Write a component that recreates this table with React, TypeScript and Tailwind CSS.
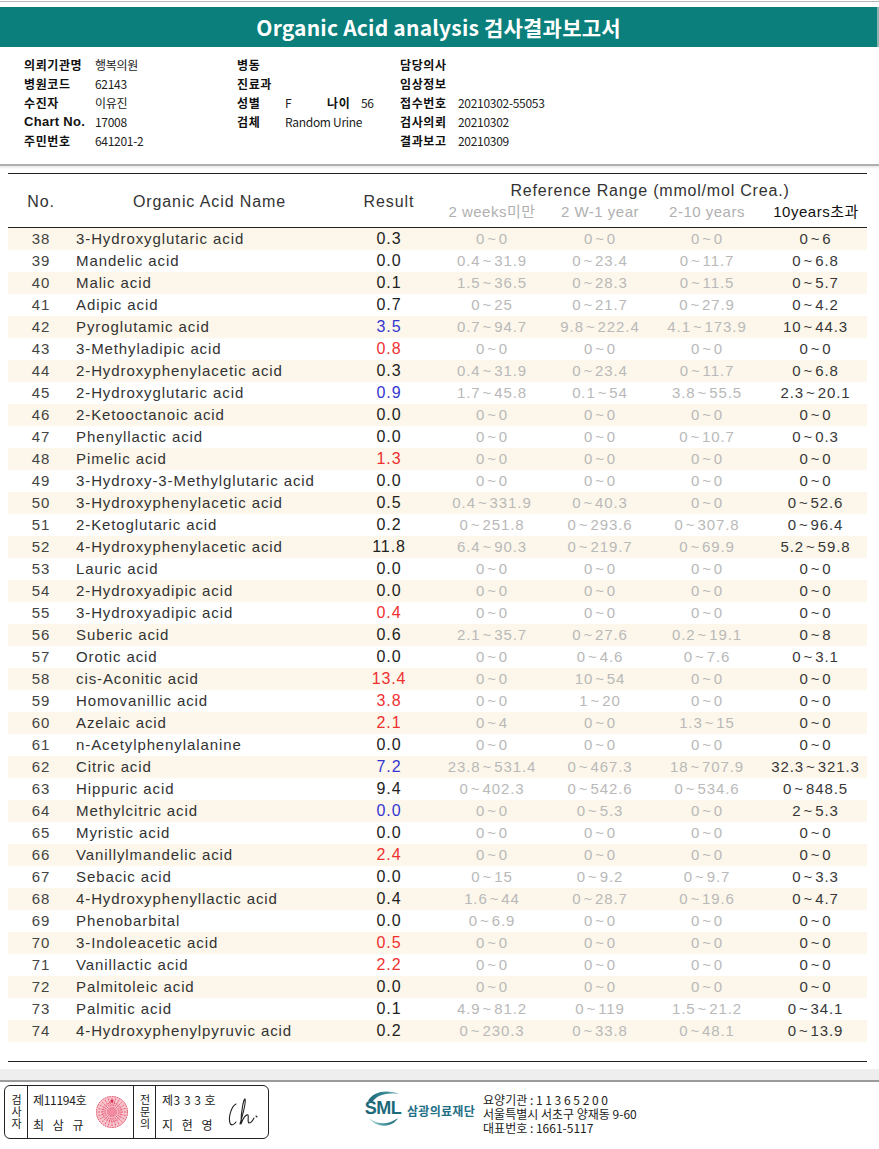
import React from 'react';

type Row = [number, string, string, '' | 'r' | 'b', string, string, string, string];

const ROWS: Row[] = [
  [38, '3-Hydroxyglutaric acid', '0.3', '', '0~0', '0~0', '0~0', '0~6'],
  [39, 'Mandelic acid', '0.0', '', '0.4~31.9', '0~23.4', '0~11.7', '0~6.8'],
  [40, 'Malic acid', '0.1', '', '1.5~36.5', '0~28.3', '0~11.5', '0~5.7'],
  [41, 'Adipic acid', '0.7', '', '0~25', '0~21.7', '0~27.9', '0~4.2'],
  [42, 'Pyroglutamic acid', '3.5', 'b', '0.7~94.7', '9.8~222.4', '4.1~173.9', '10~44.3'],
  [43, '3-Methyladipic acid', '0.8', 'r', '0~0', '0~0', '0~0', '0~0'],
  [44, '2-Hydroxyphenylacetic acid', '0.3', '', '0.4~31.9', '0~23.4', '0~11.7', '0~6.8'],
  [45, '2-Hydroxyglutaric acid', '0.9', 'b', '1.7~45.8', '0.1~54', '3.8~55.5', '2.3~20.1'],
  [46, '2-Ketooctanoic acid', '0.0', '', '0~0', '0~0', '0~0', '0~0'],
  [47, 'Phenyllactic acid', '0.0', '', '0~0', '0~0', '0~10.7', '0~0.3'],
  [48, 'Pimelic acid', '1.3', 'r', '0~0', '0~0', '0~0', '0~0'],
  [49, '3-Hydroxy-3-Methylglutaric acid', '0.0', '', '0~0', '0~0', '0~0', '0~0'],
  [50, '3-Hydroxyphenylacetic acid', '0.5', '', '0.4~331.9', '0~40.3', '0~0', '0~52.6'],
  [51, '2-Ketoglutaric acid', '0.2', '', '0~251.8', '0~293.6', '0~307.8', '0~96.4'],
  [52, '4-Hydroxyphenylacetic acid', '11.8', '', '6.4~90.3', '0~219.7', '0~69.9', '5.2~59.8'],
  [53, 'Lauric acid', '0.0', '', '0~0', '0~0', '0~0', '0~0'],
  [54, '2-Hydroxyadipic acid', '0.0', '', '0~0', '0~0', '0~0', '0~0'],
  [55, '3-Hydroxyadipic acid', '0.4', 'r', '0~0', '0~0', '0~0', '0~0'],
  [56, 'Suberic acid', '0.6', '', '2.1~35.7', '0~27.6', '0.2~19.1', '0~8'],
  [57, 'Orotic acid', '0.0', '', '0~0', '0~4.6', '0~7.6', '0~3.1'],
  [58, 'cis-Aconitic acid', '13.4', 'r', '0~0', '10~54', '0~0', '0~0'],
  [59, 'Homovanillic acid', '3.8', 'r', '0~0', '1~20', '0~0', '0~0'],
  [60, 'Azelaic acid', '2.1', 'r', '0~4', '0~0', '1.3~15', '0~0'],
  [61, 'n-Acetylphenylalanine', '0.0', '', '0~0', '0~0', '0~0', '0~0'],
  [62, 'Citric acid', '7.2', 'b', '23.8~531.4', '0~467.3', '18~707.9', '32.3~321.3'],
  [63, 'Hippuric acid', '9.4', '', '0~402.3', '0~542.6', '0~534.6', '0~848.5'],
  [64, 'Methylcitric acid', '0.0', 'b', '0~0', '0~5.3', '0~0', '2~5.3'],
  [65, 'Myristic acid', '0.0', '', '0~0', '0~0', '0~0', '0~0'],
  [66, 'Vanillylmandelic acid', '2.4', 'r', '0~0', '0~0', '0~0', '0~0'],
  [67, 'Sebacic acid', '0.0', '', '0~15', '0~9.2', '0~9.7', '0~3.3'],
  [68, '4-Hydroxyphenyllactic acid', '0.4', '', '1.6~44', '0~28.7', '0~19.6', '0~4.7'],
  [69, 'Phenobarbital', '0.0', '', '0~6.9', '0~0', '0~0', '0~0'],
  [70, '3-Indoleacetic acid', '0.5', 'r', '0~0', '0~0', '0~0', '0~0'],
  [71, 'Vanillactic acid', '2.2', 'r', '0~0', '0~0', '0~0', '0~0'],
  [72, 'Palmitoleic acid', '0.0', '', '0~0', '0~0', '0~0', '0~0'],
  [73, 'Palmitic acid', '0.1', '', '4.9~81.2', '0~119', '1.5~21.2', '0~34.1'],
  [74, '4-Hydroxyphenylpyruvic acid', '0.2', '', '0~230.3', '0~33.8', '0~48.1', '0~13.9'],
];

const GRID = 'grid grid-cols-[66px_271px_88px_118px_98px_116px_101px]';

function Range({ v, dark }: { v: string; dark?: boolean }) {
  const [a, b] = v.split('~');
  return (
    <span className={`text-center whitespace-nowrap ${dark ? 'text-[#383838]' : 'text-[#b9b9b9]'}`}>
      {a}
      <span className="mx-[2px]">~</span>
      {b}
    </span>
  );
}

function Stamp() {
  const spokes = Array.from({ length: 24 }, (_, i) => i * 15);
  return (
    <svg width="34" height="34" viewBox="0 0 34 34">
      <circle cx="17" cy="17" r="16" fill="#f7c4cc" />
      <circle cx="17" cy="17" r="15.5" fill="none" stroke="#e0506a" strokeWidth="1" strokeDasharray="1.5 1" />
      {spokes.map((a) => (
        <line
          key={a}
          x1="17"
          y1="17"
          x2={17 + 14 * Math.cos((a * Math.PI) / 180)}
          y2={17 + 14 * Math.sin((a * Math.PI) / 180)}
          stroke="#e4486a"
          strokeWidth="0.8"
          strokeDasharray="2 1"
        />
      ))}
      <circle cx="17" cy="17" r="9" fill="none" stroke="#e03a5c" strokeWidth="1" strokeDasharray="1 1" />
      <circle cx="17" cy="17" r="4" fill="#f18aa0" />
      <circle cx="17" cy="6" r="1.6" fill="#d8304f" />
    </svg>
  );
}

function Signature() {
  return (
    <svg width="34" height="32" viewBox="0 0 34 32" fill="none" stroke="#222" strokeWidth="1.1" strokeLinecap="round">
      <path d="M10 8 C6 10 2 20 4 27 C5 30 8 29 10 26" />
      <path d="M14 28 C17 18 20 6 19 3 C18 2 15 14 15 28 C17 22 20 18 22 19 C23 21 21 26 23 27 C25 27 27 24 28 22" />
      <path d="M30 20 L31 21" />
    </svg>
  );
}

function Logo() {
  return (
    <div className="flex flex-col items-center w-[42px]">
      <svg width="36" height="11" viewBox="0 0 36 11">
        <defs>
          <linearGradient id="lt" x1="0" x2="1" y1="0" y2="0">
            <stop offset="0" stopColor="#1c6577" />
            <stop offset="0.6" stopColor="#3f8f99" />
            <stop offset="1" stopColor="#b9dde0" />
          </linearGradient>
        </defs>
        <path d="M3 11 C8 2 20 -1 35 4 C22 2 12 5 8 11 Z" fill="url(#lt)" />
      </svg>
      <span className="text-[18px] leading-[14px] font-bold text-[#1d6a7b] tracking-[-0.5px]">SML</span>
      <svg width="36" height="13" viewBox="0 0 36 13">
        <defs>
          <linearGradient id="lb" x1="0" x2="1" y1="0" y2="0">
            <stop offset="0" stopColor="#c2e2e4" />
            <stop offset="0.5" stopColor="#4d9aa3" />
            <stop offset="1" stopColor="#1c6577" />
          </linearGradient>
        </defs>
        <path d="M3 2 C10 9 22 11 33 3 C27 13 12 14 3 2 Z" fill="url(#lb)" />
      </svg>
    </div>
  );
}

const KO = "font-['Noto_Sans_CJK_KR','Liberation_Sans',sans-serif]";

function Label({ children }: { children: React.ReactNode }) {
  return <span className={`font-bold text-[12px] text-[#111] tracking-[0.6px] ${KO}`}>{children}</span>;
}

function Val({ children }: { children?: React.ReactNode }) {
  return <span className={`text-[12px] text-[#222] tracking-[-0.3px] ${KO}`}>{children}</span>;
}

export default function App() {
  return (
    <div className="w-[879px] h-[1149px] bg-white overflow-hidden font-['Liberation_Sans','Noto_Sans_CJK_KR',sans-serif] text-[#222]">
      {/* top bar */}
      <div className="h-[1px] mt-[1px] bg-[#b8b8b8]" />
      <div className="mt-[5px] h-[40px] bg-[#0a7f7b] border-r-2 border-[#8fb3b1] flex items-center justify-center">
        <h1 className="text-white text-[21px] font-bold font-['Noto_Sans_CJK_KR',sans-serif] leading-none tracking-[0.2px]">
          Organic Acid analysis 검사결과보고서
        </h1>
      </div>

      {/* patient info */}
      <div className="mt-[8px] pl-[24px] grid grid-cols-[71px_142px_48px_115px_58px_1fr] auto-rows-[19px] items-center leading-[19px]">
        <Label>의뢰기관명</Label>
        <Val>행복의원</Val>
        <Label>병동</Label>
        <Val />
        <Label>담당의사</Label>
        <Val />

        <Label>병원코드</Label>
        <Val>62143</Val>
        <Label>진료과</Label>
        <Val />
        <Label>임상정보</Label>
        <Val />

        <Label>수진자</Label>
        <Val>이유진</Val>
        <Label>성별</Label>
        <div className="flex">
          <span className="w-[42px]"><Val>F</Val></span>
          <span className="w-[34px]"><Label>나이</Label></span>
          <Val>56</Val>
        </div>
        <Label>접수번호</Label>
        <Val>20210302-55053</Val>

        <span className="font-bold text-[13px] text-[#111] tracking-[0.3px]">Chart No.</span>
        <Val>17008</Val>
        <Label>검체</Label>
        <Val>Random Urine</Val>
        <Label>검사의뢰</Label>
        <Val>20210302</Val>

        <Label>주민번호</Label>
        <Val>641201-2</Val>
        <span />
        <span />
        <Label>결과보고</Label>
        <Val>20210309</Val>
      </div>

      {/* separator */}
      <div className="mt-[14px] h-[2px] bg-[#b0b0b0]" />
      <div className="h-[3px] bg-gradient-to-b from-[#e6e6e6] to-white" />

      {/* table */}
      <div className="mt-[4px] ml-[8px] w-[859px] text-[15px] tracking-[0.9px]">
        <div className="grid grid-cols-[66px_271px_88px_434px] h-[55px] border-t border-b border-[#222] text-[16px] text-[#333]">
          <div className="flex items-center justify-center pt-[3px]">No.</div>
          <div className="flex items-center justify-center pt-[3px]">Organic Acid Name</div>
          <div className="flex items-center justify-center pt-[3px]">Result</div>
          <div className="flex flex-col pt-[8px]">
            <div className="text-center leading-[18px] tracking-[0.8px]">Reference Range (mmol/mol Crea.)</div>
            <div className="grid grid-cols-[118px_98px_116px_102px] leading-[24px] text-[15px] tracking-[0.5px]">
              <span className="text-center text-[#b0b0b0]">2 weeks미만</span>
              <span className="text-center text-[#b0b0b0]">2 W-1 year</span>
              <span className="text-center text-[#b0b0b0]">2-10 years</span>
              <span className="text-center text-[#111]">10years초과</span>
            </div>
          </div>
        </div>

        {ROWS.map((r, i) => (
          <div
            key={r[0]}
            className={`${GRID} h-[22px] items-center leading-[22px] ${i % 2 === 0 ? 'bg-[#fcf7ea]' : 'bg-white'}`}
          >
            <span className="text-center text-[#444]">{r[0]}</span>
            <span className="pl-[2px] text-[#333] whitespace-nowrap">{r[1]}</span>
            <span
              className={`text-center text-[16px] ${
                r[3] === 'r' ? 'text-[#ee3030]' : r[3] === 'b' ? 'text-[#3535d0]' : 'text-[#222]'
              }`}
            >
              {r[2]}
            </span>
            <Range v={r[4]} />
            <Range v={r[5]} />
            <Range v={r[6]} />
            <Range v={r[7]} dark />
          </div>
        ))}

        <div className="mt-[19px] border-t border-[#222]" />
      </div>

      {/* footer bands */}
      <div className="h-[7px]" />
      <div className="h-[11px] bg-[#eeeeee]" />
      <div className="h-[2px] bg-[#9a9a9a]" />

      {/* footer */}
      <div className="flex items-start pt-[3px]">
        <div className={`ml-[4px] w-[265px] h-[54px] border border-[#222] rounded-[6px] flex text-[12px] text-[#222] ${KO}`}>
          <div className="w-[23px] border-r border-[#222] flex items-center justify-center">
            <span className="[writing-mode:vertical-rl] text-[11px] leading-none tracking-[1px]">검사자</span>
          </div>
          <div className="w-[106px] border-r border-[#222] flex items-center pl-[5px] pr-[4px]">
            <div className="flex flex-col leading-[14px] gap-[11px] whitespace-nowrap">
              <span className="tracking-[-0.3px]">제11194호</span>
              <span className="tracking-[3px]">최 삼 규</span>
            </div>
            <div className="ml-auto">
              <Stamp />
            </div>
          </div>
          <div className="w-[22px] border-r border-[#222] flex items-center justify-center">
            <span className="[writing-mode:vertical-rl] text-[11px] leading-none tracking-[1px]">전문의</span>
          </div>
          <div className="flex-1 flex items-center pl-[6px]">
            <div className="flex flex-col leading-[14px] gap-[11px] whitespace-nowrap">
              <span className="tracking-[0.5px]">제3 3 3 호</span>
              <span className="tracking-[3px]">지 현 영</span>
            </div>
            <div className="ml-[10px]">
              <Signature />
            </div>
          </div>
        </div>

        <div className="ml-[93px] mt-[5px] flex items-center">
          <Logo />
          <span className={`ml-[3px] mt-[3px] text-[12px] font-bold text-[#1f6f86] tracking-[0.3px] ${KO}`}>
            삼광의료재단
          </span>
        </div>

        <p className={`ml-[8px] mt-[8px] text-[12px] leading-[14px] text-[#222] whitespace-nowrap ${KO}`}>
          요양기관 : 1 1 3 6 5 2 0 0
          <br />
          서울특별시 서초구 양재동 9-60
          <br />
          대표번호 : 1661-5117
        </p>
      </div>
    </div>
  );
}
